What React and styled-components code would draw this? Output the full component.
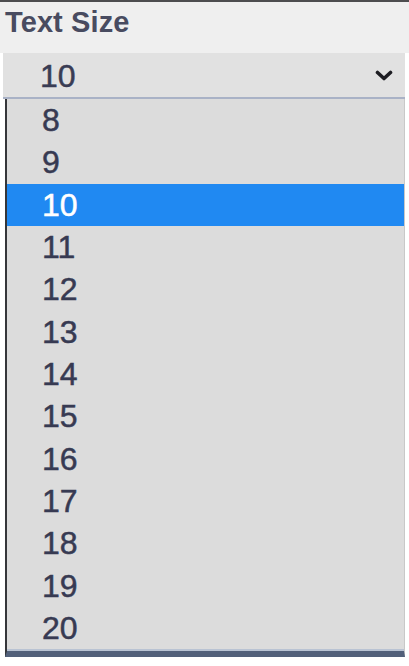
import React, { useState } from "react";
import styled, { createGlobalStyle } from "styled-components";

const sizes = [8, 9, 10, 11, 12, 13, 14, 15, 16, 17, 18, 19, 20];

const App = () => {
    const [selected, setSelected] = useState(10);

    return (
        <>
            <GlobalStyle />
            <Panel>
                <Header>Text Size</Header>
                <Select>
                    <Current>{selected}</Current>
                    <Chevron viewBox="0 0 18 11" aria-hidden="true">
                        <path d="M2.5 2.5 L9 8.5 L15.5 2.5" />
                    </Chevron>
                </Select>
                <Options>
                    {sizes.map((size) => (
                        <Option
                            key={size}
                            $active={size === selected}
                            onClick={() => setSelected(size)}
                        >
                            {size}
                        </Option>
                    ))}
                </Options>
            </Panel>
        </>
    );
};

export default App;

const GlobalStyle = createGlobalStyle`
    body {
        margin: 0;
        background: #ffffff;
        font-family: "Liberation Sans", Arial, sans-serif;
    }
`;

const Panel = styled.div`
    width: 409px;
    border-top: 2px solid #4d4d4f;
    background: #ffffff;
`;

const Header = styled.div`
    height: 51px;
    box-sizing: border-box;
    padding: 5px 0 0 5px;
    background: #efefef;
    color: #484b60;
    font-size: 29px;
    font-weight: bold;
    line-height: 30px;
    letter-spacing: 0.1px;
`;

const Select = styled.div`
    display: flex;
    align-items: center;
    justify-content: space-between;
    height: 46px;
    box-sizing: border-box;
    margin: 0 4px 0 3px;
    padding: 1px 12px 0 37px;
    background: #e1e1e1;
    border-bottom: 2px solid #a9b2c6;
`;

const Current = styled.span`
    color: #393c54;
    font-size: 32px;
    line-height: 44px;
    -webkit-text-stroke: 0.5px #393c54;
`;

const Chevron = styled.svg`
    width: 18px;
    height: 11px;
    fill: none;
    stroke: #1d1d22;
    stroke-width: 3.6;
    stroke-linecap: round;
    stroke-linejoin: round;
`;

const Options = styled.ul`
    list-style: none;
    margin: 0 4px 0 5px;
    padding: 0 0 2px;
    background: #dcdcdc;
    border-left: 2px solid #35363a;
    border-right: 1px solid #c8c8c8;
    border-bottom: 6px solid #52607a;
    box-shadow: 0 -2px 0 #b9c3d3 inset;
`;

const Option = styled.li`
    height: 42.33px;
    padding-left: 35px;
    background: ${(p) => (p.$active ? "#2089f2" : "transparent")};
    color: ${(p) => (p.$active ? "#ffffff" : "#373a52")};
    font-size: 32px;
    line-height: 42.33px;
    -webkit-text-stroke: 0.5px ${(p) => (p.$active ? "#ffffff" : "#373a52")};
    cursor: default;
`;
